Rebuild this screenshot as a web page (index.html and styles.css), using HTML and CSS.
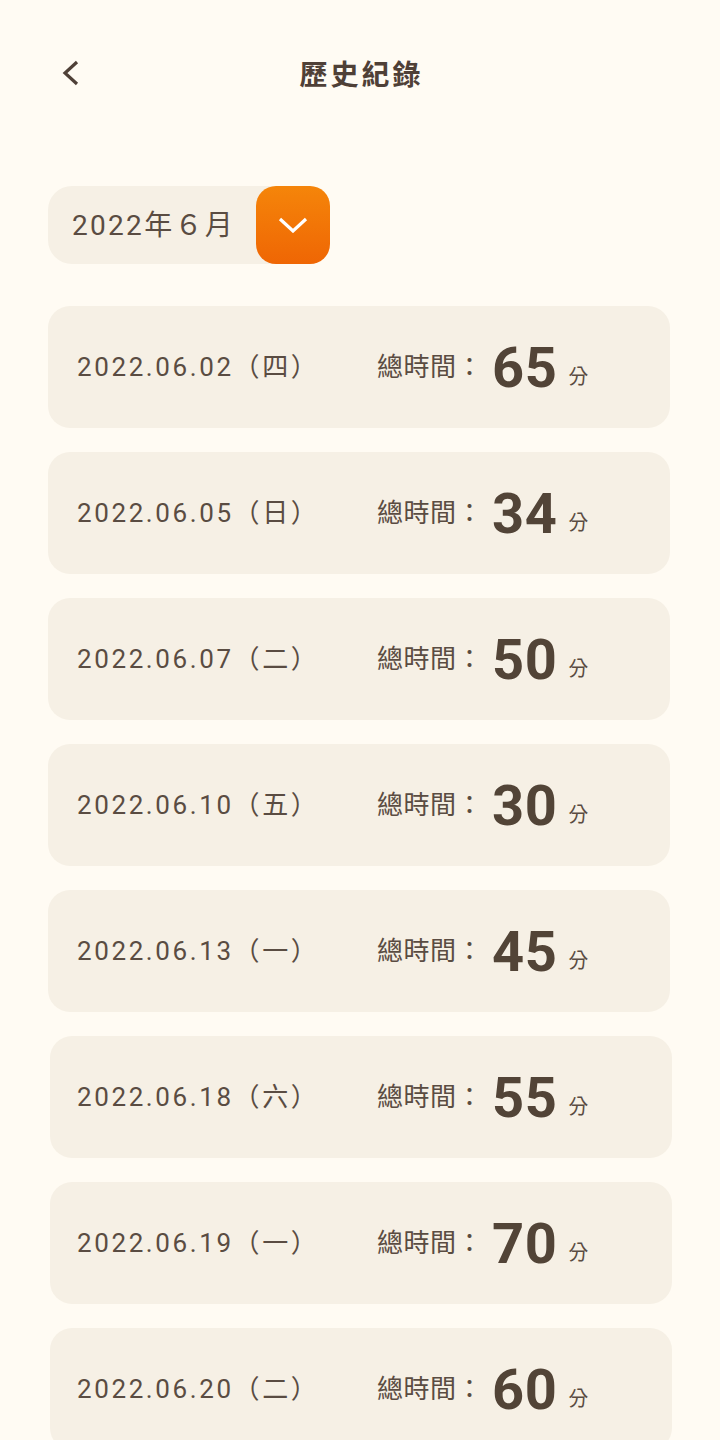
FILE: index.html
```html
<!DOCTYPE html>
<html lang="zh-Hant">
<head>
<meta charset="utf-8">
<title>歷史紀錄</title>
<link rel="stylesheet" href="styles.css">
</head>
<body>
<header class="topbar">
  <button class="back" aria-label="返回">
    <svg width="28" height="28" viewBox="0 0 28 28"><path d="M20 3 L8 14 L20 25" fill="none" stroke="#4f4037" stroke-width="3.2"/></svg>
  </button>
  <h1 class="title">歷史紀錄</h1>
  <span></span>
</header>
<main class="content">
  <div class="month-select">
    <span class="month-label">2022年６月</span>
    <button class="month-btn" aria-label="選擇月份">
      <svg width="30" height="16" viewBox="0 0 30 16"><path d="M2 2 L15 14 L28 2" fill="none" stroke="#fff" stroke-width="3.2"/></svg>
    </button>
  </div>
  <ul class="records">
    <li class="card"><span class="date">2022.06.02（四）</span><span class="label">總時間：</span><span class="num">65</span><span class="unit">分</span></li>
    <li class="card"><span class="date">2022.06.05（日）</span><span class="label">總時間：</span><span class="num">34</span><span class="unit">分</span></li>
    <li class="card"><span class="date">2022.06.07（二）</span><span class="label">總時間：</span><span class="num">50</span><span class="unit">分</span></li>
    <li class="card"><span class="date">2022.06.10（五）</span><span class="label">總時間：</span><span class="num">30</span><span class="unit">分</span></li>
    <li class="card"><span class="date">2022.06.13（一）</span><span class="label">總時間：</span><span class="num">45</span><span class="unit">分</span></li>
    <li class="card card-shift"><span class="date">2022.06.18（六）</span><span class="label">總時間：</span><span class="num">55</span><span class="unit">分</span></li>
    <li class="card card-shift"><span class="date">2022.06.19（一）</span><span class="label">總時間：</span><span class="num">70</span><span class="unit">分</span></li>
    <li class="card card-shift"><span class="date">2022.06.20（二）</span><span class="label">總時間：</span><span class="num">60</span><span class="unit">分</span></li>
  </ul>
</main>
</body>
</html>
```
FILE: styles.css
```css
* { box-sizing: border-box; }
html, body {
  margin: 0;
  padding: 0;
  background: #fffbf3;
  color: #574a40;
  font-family: Roboto, "Noto Sans CJK TC", sans-serif;
}
body { height: 1440px; overflow: hidden; }

.topbar {
  margin-top: 44px;
  height: 58px;
  display: grid;
  grid-template-columns: 1fr auto 1fr;
  align-items: center;
}
.back {
  justify-self: start;
  margin-left: 57px;
  padding: 0;
  border: 0;
  background: none;
  width: 28px;
  height: 28px;
  display: flex;
}
.title {
  margin: 0;
  font-size: 28px;
  font-weight: 700;
  letter-spacing: 3px;
  margin-right: -3px;
  color: #4f4037;
}

.content { padding: 0 48px; }

.month-select {
  margin-top: 84px;
  width: 282px;
  height: 78px;
  background: #f6f0e5;
  border-radius: 24px;
  display: flex;
  align-items: center;
}
.month-label {
  padding-left: 24px;
  padding-bottom: 4px;
  font-size: 28px;
  letter-spacing: 2.3px;
  color: #5a4c42;
}
.month-btn {
  margin-left: auto;
  width: 74px;
  height: 78px;
  border: 0;
  padding: 0;
  border-radius: 20px;
  background: linear-gradient(#f5850a, #ef6604);
  display: flex;
  align-items: center;
  justify-content: center;
}

.records {
  list-style: none;
  margin: 42px 0 0;
  padding: 0;
  display: flex;
  flex-direction: column;
  gap: 24px;
}
.card {
  width: 622px;
  height: 122px;
  flex: none;
  background: #f6f0e5;
  border-radius: 22px;
  display: flex;
  align-items: center;
  padding-left: 29px;
  padding-bottom: 5px;
}
.card-shift { margin-left: 2px; padding-left: 27px; }
.date {
  width: 300px;
  font-size: 26px;
  letter-spacing: 2.6px;
  color: #5a4c42;
}
.label {
  font-size: 26px;
  letter-spacing: 0.5px;
  color: #5a4c42;
}
.num {
  margin-left: 9px;
  font-size: 56px;
  font-weight: 700;
  letter-spacing: 0.5px;
  color: #524437;
  line-height: 1;
  padding-top: 6px;
}
.unit {
  margin-left: 11px;
  font-size: 20px;
  color: #5a4c42;
  padding-top: 22px;
}
```
